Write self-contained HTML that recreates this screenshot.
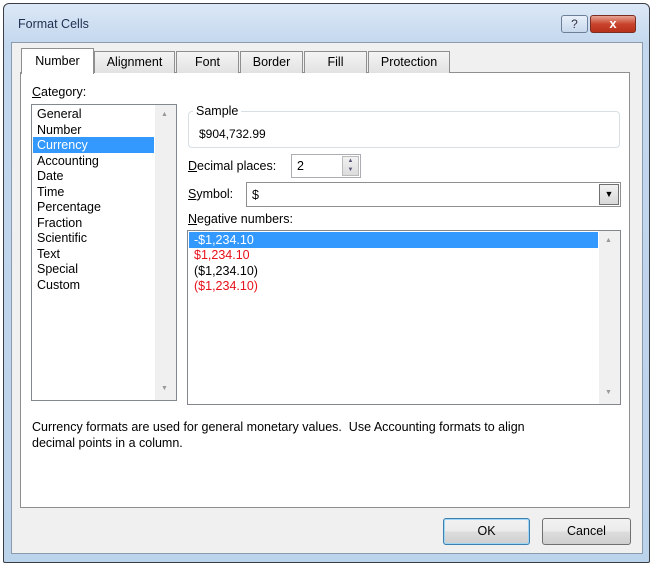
<!DOCTYPE html>
<html><head><style>
*{box-sizing:border-box;margin:0;padding:0}
body{width:653px;height:567px;background:#fff;font-family:"Liberation Sans",sans-serif;font-size:12px;color:#000;position:relative;overflow:hidden}
.a{position:absolute}
.win{left:3px;top:3px;width:647px;height:560px;border:1px solid #3b3f45;border-radius:6px 6px 2px 2px;background:linear-gradient(#dce8f6,#c3d7ee 40px,#bcd3ec)}
.client{left:11px;top:42px;width:632px;height:512px;background:#f0f0f0;border:1px solid #8a9bb0}
.panel{left:20px;top:72px;width:610px;height:436px;background:#fff;border:1px solid #8e8f8f}
.tab{top:51px;height:22px;border:1px solid #8e8f8f;border-bottom:none;background:linear-gradient(#f4f4f4,#e2e2e2);text-align:center;line-height:21px;font-size:12.5px}
.list{border:1px solid #828790;background:#fff}
.sb{background:#f0f0f0}
.it{position:absolute;left:5px;font-size:12.5px;line-height:15.5px}
u{text-decoration:underline}
.btn{border:1px solid #707070;border-radius:3px;background:linear-gradient(#f2f2f2,#ebebeb 50%,#dddddd 51%,#cfcfcf);text-align:center;line-height:25px;font-size:12.5px}
</style></head><body>
<div class="a win"></div>
<div class="a" style="left:18px;top:17px;font-size:12.5px;color:#1e3050">Format Cells</div>
<div class="a" style="left:561px;top:15px;width:27px;height:18px;border:1px solid #6d7f98;border-radius:3px;background:linear-gradient(#e8f0fa,#c8d8ec);text-align:center;font-size:12px;line-height:16px;color:#334">?</div>
<div class="a" style="left:590px;top:15px;width:46px;height:18px;border:1px solid #7a2d22;border-radius:3px;background:linear-gradient(#e8a595,#c9442c 50%,#b8301a);text-align:center;color:#fff;font-weight:bold;line-height:16px;font-size:13px">x</div>
<div class="a client"></div>
<div class="a panel"></div>
<div class="a tab" style="left:94px;width:81px">Alignment</div>
<div class="a tab" style="left:176px;width:63px">Font</div>
<div class="a tab" style="left:240px;width:63px">Border</div>
<div class="a tab" style="left:304px;width:63px">Fill</div>
<div class="a tab" style="left:368px;width:82px">Protection</div>
<div class="a tab" style="left:21px;top:48px;width:73px;height:26px;background:#fff;line-height:25px">Number</div>
<div class="a" style="left:32px;top:85px;font-size:12.5px"><u>C</u>ategory:</div>
<div class="a list" style="left:31px;top:104px;width:146px;height:297px">
<div class="a sb" style="left:123px;top:0;width:21px;height:295px"></div>
<div class="a" style="left:129px;top:6px;font-size:7px;color:#999">▲</div>
<div class="a" style="left:129px;top:280px;font-size:7px;color:#999">▼</div>
<div class="a" style="left:1px;top:32px;width:121px;height:16px;background:#3399ff"></div>
<div class="it" style="top:2px">General</div>
<div class="it" style="top:17.5px">Number</div>
<div class="it" style="top:33px;color:#fff">Currency</div>
<div class="it" style="top:48.5px">Accounting</div>
<div class="it" style="top:64px">Date</div>
<div class="it" style="top:79.5px">Time</div>
<div class="it" style="top:95px">Percentage</div>
<div class="it" style="top:110.5px">Fraction</div>
<div class="it" style="top:126px">Scientific</div>
<div class="it" style="top:141.5px">Text</div>
<div class="it" style="top:157px">Special</div>
<div class="it" style="top:172.5px">Custom</div>
</div>
<div class="a" style="left:188px;top:111px;width:432px;height:37px;border:1px solid #d5dfe5;border-radius:4px"></div>
<div class="a" style="left:193px;top:104px;background:#fff;padding:0 3px;font-size:12.5px">Sample</div>
<div class="a" style="left:199px;top:127px">$904,732.99</div>
<div class="a" style="left:188px;top:159px;font-size:12.5px"><u>D</u>ecimal places:</div>
<div class="a" style="left:291px;top:154px;width:70px;height:24px;border:1px solid #abadb3;background:#fff;padding:4px 5px;font-size:12.5px">2
<div class="a" style="left:50px;top:1px;width:17px;height:20px;background:linear-gradient(#f2f2f2,#dcdcdc);border:1px solid #bbb;font-size:6px;color:#557;text-align:center;line-height:9px">▲<br>▼</div></div>
<div class="a" style="left:188px;top:187px;font-size:12.5px"><u>S</u>ymbol:</div>
<div class="a" style="left:246px;top:182px;width:375px;height:25px;border:1px solid #8e8f8f;background:#fff;padding:5px 5px;font-size:12.5px">$
<div class="a" style="right:1px;top:1px;width:20px;height:21px;border:1px solid #707070;background:linear-gradient(#f2f2f2,#d8d8d8);font-size:9px;text-align:center;line-height:19px">▼</div></div>
<div class="a" style="left:188px;top:212px;font-size:12.5px"><u>N</u>egative numbers:</div>
<div class="a list" style="left:187px;top:230px;width:434px;height:175px">
<div class="a sb" style="left:411px;top:0;width:21px;height:173px"></div>
<div class="a" style="left:417px;top:6px;font-size:7px;color:#999">▲</div>
<div class="a" style="left:417px;top:158px;font-size:7px;color:#999">▼</div>
<div class="a" style="left:1px;top:1px;width:409px;height:16px;background:#3399ff"></div>
<div class="it" style="left:6px;top:1.5px;color:#fff">-$1,234.10</div>
<div class="it" style="left:6px;top:17px;color:#e8101a">$1,234.10</div>
<div class="it" style="left:6px;top:32.5px">($1,234.10)</div>
<div class="it" style="left:6px;top:48px;color:#e8101a">($1,234.10)</div>
</div>
<div class="a" style="left:32px;top:420px;font-size:12.5px;line-height:15.5px;width:530px">Currency formats are used for general monetary values.&nbsp; Use Accounting formats to align decimal points in a column.</div>
<div class="a btn" style="left:443px;top:518px;width:87px;height:27px;border-color:#3c7fb1;box-shadow:inset 0 0 0 1px #9fd5f5">OK</div>
<div class="a btn" style="left:542px;top:518px;width:89px;height:27px">Cancel</div>
</body></html>
